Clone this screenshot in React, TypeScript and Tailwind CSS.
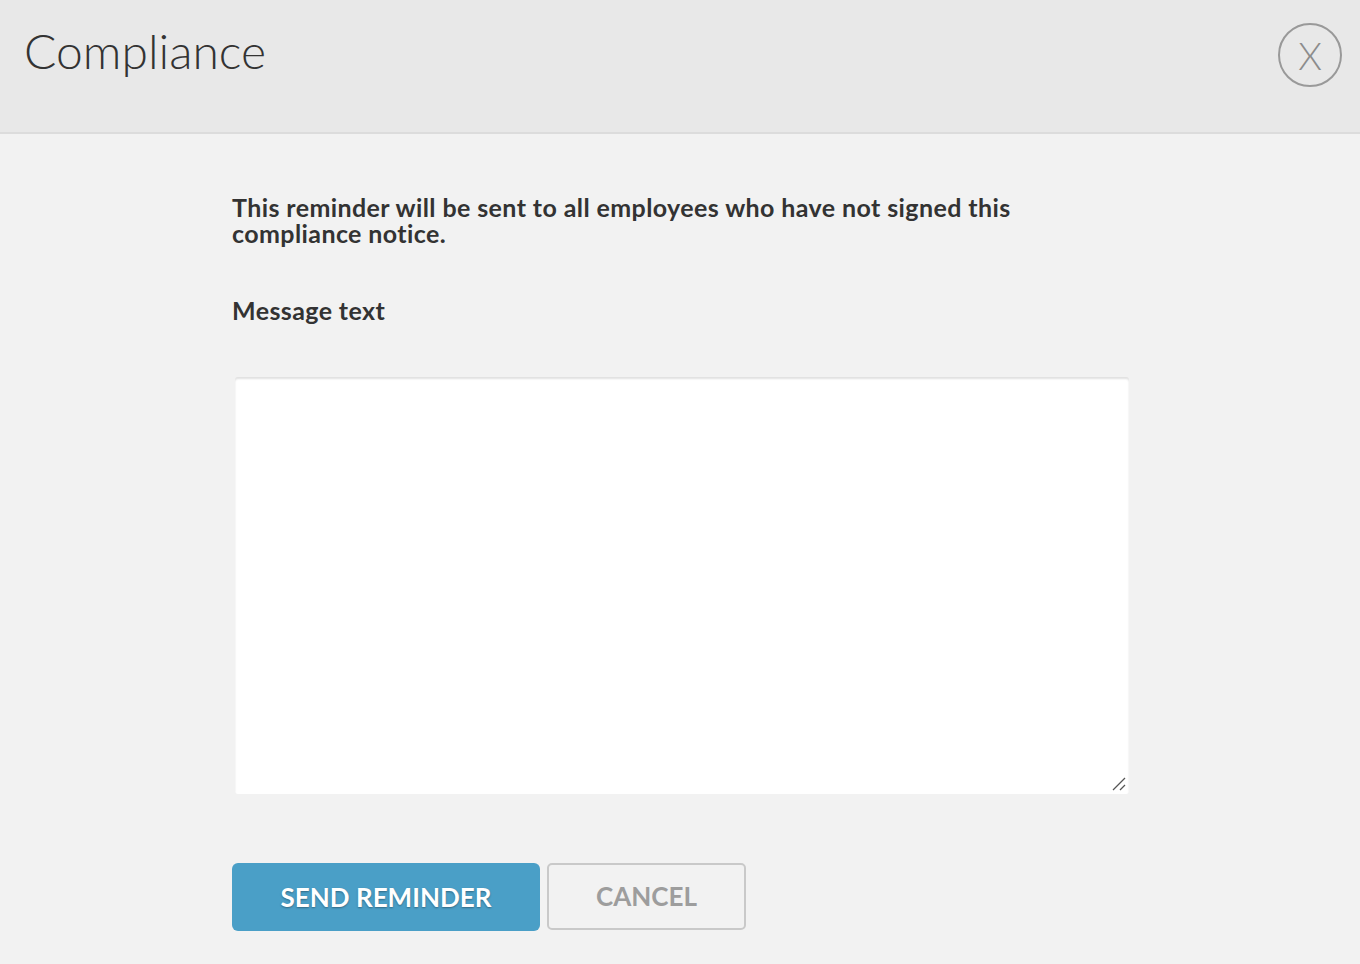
export default function App() {
  return (
    <div className="min-h-[964px] w-full bg-[#f2f2f2] font-['Lato','Liberation_Sans',sans-serif] text-[#333]">
      <header className="flex h-[134px] items-start justify-between border-b-2 border-[#dcdcdc] bg-[#e8e8e8] pl-6 pr-[18px]">
        <h1 className="mt-[22px] text-[48px] font-light leading-[58px] text-[#333]">Compliance</h1>
        <button
          aria-label="Close"
          className="mt-[23px] flex h-[64px] w-[64px] items-center justify-center rounded-full border-2 border-[#999] bg-transparent text-[38px] font-light leading-none text-[#8c8c8c]"
        >
          X
        </button>
      </header>

      <main className="pl-[232px] pt-[60px]">
        <p className="w-[800px] text-[25px] font-bold leading-[26px] tracking-[0.4px] text-[#333] [font-variant-ligatures:none]">
          This reminder will be sent to all employees who have not signed this compliance notice.
        </p>

        <label htmlFor="msg" className="mt-[50px] block text-[25px] font-bold leading-[28px] tracking-[0.4px] text-[#333]">
          Message text
        </label>

        <div className="relative mt-[53px] ml-[3px] h-[417px] w-[894px]">
          <textarea
            id="msg"
            className="block h-full w-full resize-none rounded-[3px] bg-white shadow-[inset_0_2px_2px_rgba(0,0,0,0.12)] outline-none"
          />
          <svg className="pointer-events-none absolute bottom-[2px] right-[2px]" width="16" height="16" viewBox="0 0 16 16">
            <line x1="2" y1="14" x2="14" y2="2" stroke="#555" strokeWidth="1.2" />
            <line x1="9" y1="14" x2="14" y2="9" stroke="#555" strokeWidth="1.2" />
          </svg>
        </div>

        <div className="mt-[69px] flex gap-[7px]">
          <button className="h-[68px] w-[308px] rounded-[6px] bg-[#4a9fc7] text-[26px] font-bold text-white [text-shadow:0_1px_2px_rgba(0,0,0,0.35)]">
            SEND REMINDER
          </button>
          <button className="h-[67px] w-[199px] rounded-[5px] border-2 border-[#c9c9c9] bg-transparent text-[26px] font-bold text-[#9d9d9d]">
            CANCEL
          </button>
        </div>
      </main>
    </div>
  );
}
